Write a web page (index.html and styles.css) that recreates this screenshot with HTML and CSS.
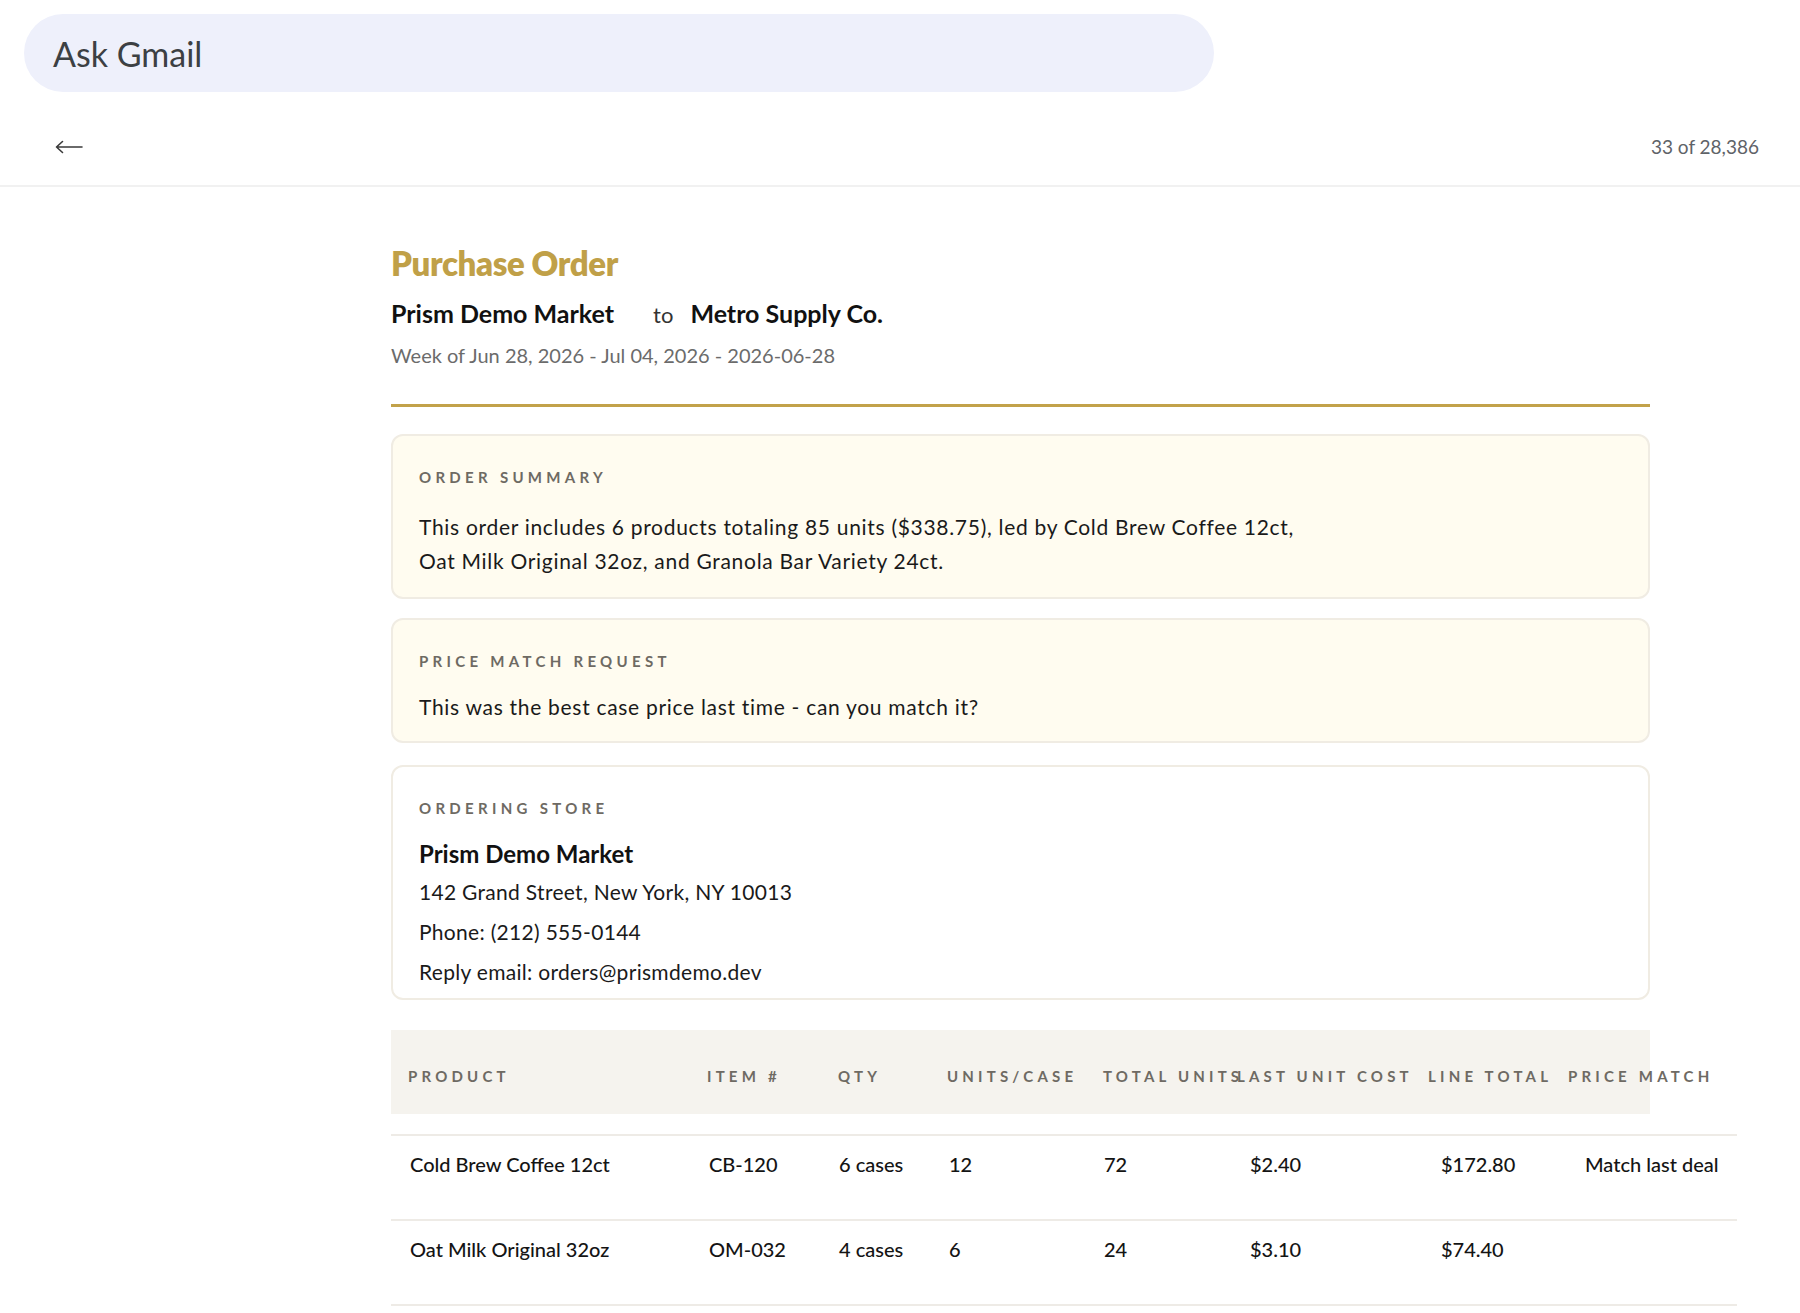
FILE: index.html
```html
<!DOCTYPE html>
<html lang="en">
<head>
<meta charset="utf-8">
<title>Purchase Order</title>
<link rel="stylesheet" href="styles.css">
</head>
<body>
  <div class="topbar">
    <div class="search">Ask Gmail</div>
  </div>
  <div class="toolbar">
    <button class="back" aria-label="Back">
      <svg width="28" height="14" viewBox="0 0 28 14"><path d="M1.5 7H27M7.5 1.5L1.5 7L7.5 12.5" fill="none" stroke="#3a3a3a" stroke-width="1.6" stroke-linecap="round" stroke-linejoin="round"/></svg>
    </button>
    <span class="count">33 of 28,386</span>
  </div>

  <main class="email">
    <header class="po-head">
      <h1 class="po-title">Purchase Order</h1>
      <div class="parties">
        <strong class="party">Prism Demo Market</strong>
        <span class="to">to</span>
        <strong class="party">Metro Supply Co.</strong>
      </div>
      <div class="dates">Week of Jun 28, 2026 - Jul 04, 2026 - 2026-06-28</div>
    </header>

    <section class="card card-note card-summary">
      <div class="label">Order Summary</div>
      <p class="card-text summary-text">This order includes 6 products totaling 85 units ($338.75), led by Cold Brew Coffee 12ct, Oat Milk Original 32oz, and Granola Bar Variety 24ct.</p>
    </section>

    <section class="card card-note card-request">
      <div class="label">Price Match Request</div>
      <p class="card-text">This was the best case price last time - can you match it?</p>
    </section>

    <section class="card card-plain">
      <div class="label">Ordering Store</div>
      <div class="store-name">Prism Demo Market</div>
      <div class="store-line">142 Grand Street, New York, NY 10013</div>
      <div class="store-line">Phone: (212) 555-0144</div>
      <div class="store-line">Reply email: orders@prismdemo.dev</div>
    </section>

    <div class="items">
      <div class="thead">
        <div class="th">Product</div>
        <div class="th">Item #</div>
        <div class="th">Qty</div>
        <div class="th">Units/Case</div>
        <div class="th">Total Units</div>
        <div class="th">Last Unit Cost</div>
        <div class="th">Line Total</div>
        <div class="th">Price Match</div>
      </div>
      <div class="tbody">
        <div class="trow">
          <div class="td">Cold Brew Coffee 12ct</div>
          <div class="td">CB-120</div>
          <div class="td">6 cases</div>
          <div class="td">12</div>
          <div class="td">72</div>
          <div class="td">$2.40</div>
          <div class="td">$172.80</div>
          <div class="td">Match last deal</div>
        </div>
        <div class="trow">
          <div class="td">Oat Milk Original 32oz</div>
          <div class="td">OM-032</div>
          <div class="td">4 cases</div>
          <div class="td">6</div>
          <div class="td">24</div>
          <div class="td">$3.10</div>
          <div class="td">$74.40</div>
          <div class="td"></div>
        </div>
      </div>
    </div>
  </main>
</body>
</html>
```

FILE: styles.css
```css
* { box-sizing: border-box; }

body {
  margin: 0;
  background: #ffffff;
  color: #1a1a1a;
  font-family: Lato, "Noto Sans", "Liberation Sans", sans-serif;
}

/* Top search bar */
.topbar {
  padding: 14px 0 0 24px;
}
.search {
  width: 1190px;
  height: 78px;
  border-radius: 39px;
  background: #eef0fb;
  padding-left: 29px;
  display: flex;
  align-items: center;
  font-size: 34px;
  color: #3c4043;
}

/* Toolbar */
.toolbar {
  height: 95px;
  padding: 16px 41px 0 55px;
  display: flex;
  align-items: center;
  justify-content: space-between;
  border-bottom: 2px solid #f1f1f1;
}
.back {
  border: 0;
  background: none;
  padding: 0;
  display: flex;
  cursor: pointer;
}
.count {
  font-size: 19px;
  color: #5f6368;
}

/* Email body */
.email {
  width: 1259px;
  margin-left: 391px;
  padding: 56px 0 40px;
}

.po-head {
  padding-bottom: 35px;
  border-bottom: 3px solid #c2a24a;
}
.po-title {
  margin: 0;
  font-size: 33px;
  line-height: 40px;
  font-weight: 800;
  color: #c0a048;
  letter-spacing: -0.4px;
}
.parties {
  margin-top: 14px;
  height: 32px;
  display: flex;
  align-items: baseline;
  font-size: 25px;
  line-height: 32px;
}
.party {
  font-weight: 700;
  color: #111111;
}
.to {
  font-size: 22px;
  color: #333333;
  margin: 0 17px 0 39px;
}
.dates {
  margin-top: 12px;
  font-size: 20px;
  line-height: 28px;
  color: #6b6b6b;
}

/* Cards */
.card {
  border: 2px solid #f0ece3;
  border-radius: 12px;
  padding: 31px 26px 17px;
  margin-top: 21px;
}
.po-head + .card { margin-top: 27px; }
.card-note { background: #fffcf0; }
.card-summary { padding-bottom: 19px; }
.card-request { margin-top: 19px; }
.card-plain {
  background: #ffffff;
  margin-top: 22px;
  padding-bottom: 11px;
}

.label {
  font-size: 15px;
  line-height: 20px;
  font-weight: 700;
  letter-spacing: 4.3px;
  text-transform: uppercase;
  color: #6e6a63;
  margin-bottom: 19px;
}
.card-text {
  margin: 0;
  max-width: 895px;
  font-size: 21px;
  line-height: 34px;
  letter-spacing: 0.7px;
  color: #1a1a1a;
}
.summary-text {
  padding-top: 4px;
}
.store-name {
  font-size: 24px;
  line-height: 34px;
  font-weight: 700;
  color: #111111;
}
.store-line {
  margin-top: 10px;
  font-size: 21px;
  line-height: 30px;
  letter-spacing: 0.3px;
}
.store-name + .store-line {
  margin-top: 6px;
}

/* Items table */
.items {
  margin-top: 30px;
}
.thead {
  display: grid;
  grid-template-columns: 299px 131px 109px 156px 134px 191px 140px 99px;
  height: 84px;
  align-items: center;
  padding-top: 8px;
  background: #f5f3ee;
}
.th {
  padding-left: 17px;
  white-space: nowrap;
  font-size: 15px;
  line-height: 20px;
  font-weight: 700;
  letter-spacing: 4.2px;
  text-transform: uppercase;
  color: #6e6a63;
}
.tbody {
  width: 1346px;
  margin-top: 20px;
}
.trow {
  display: grid;
  grid-template-columns: 299px 130px 110px 155px 146px 191px 144px 171px;
  border-top: 2px solid #eeebe6;
  padding: 13px 0 40px;
}
.trow:last-child {
  border-bottom: 2px solid #eeebe6;
}
.td {
  padding-left: 19px;
  white-space: nowrap;
  font-size: 20px;
  line-height: 30px;
  font-weight: 500;
  color: #141414;
}
```
